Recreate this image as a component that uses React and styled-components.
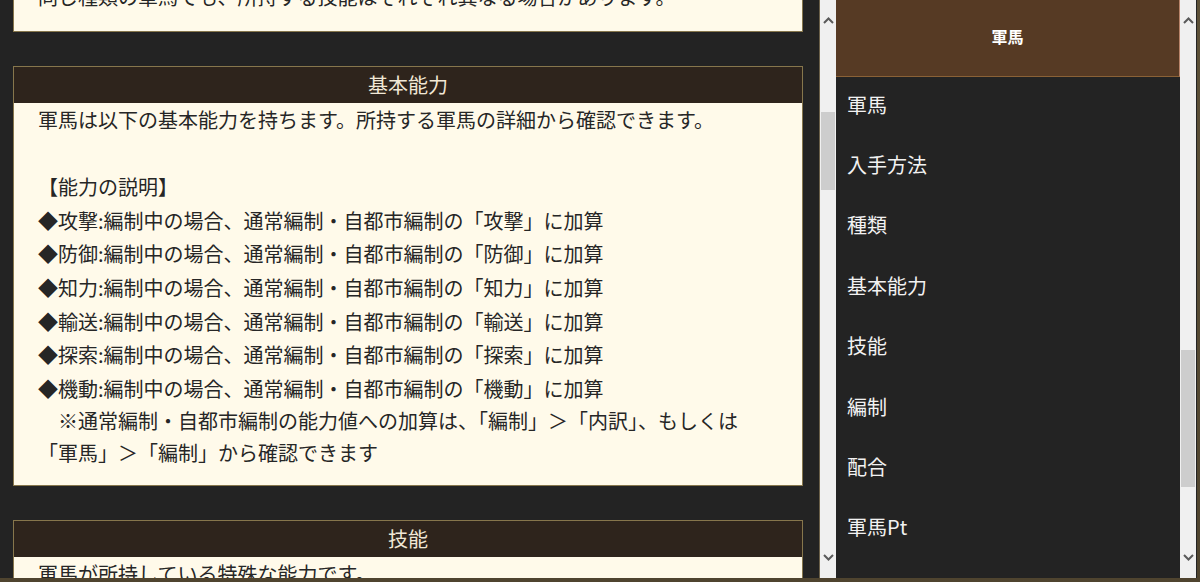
import React from "react";
import styled, { createGlobalStyle } from "styled-components";

// ** Global
const GlobalStyle = createGlobalStyle`
  html, body {
    margin: 0;
    padding: 0;
    background: #584c35;
  }
  body {
    font-family: "Noto Sans CJK JP", "Noto Sans", sans-serif;
  }
`;

// ** Frame
const Frame = styled.div`
  width: 1200px;
  height: 582px;
  overflow: hidden;
  background: linear-gradient(#5d5138, #4f442f);
`;

const Screen = styled.div`
  display: flex;
  width: 1197px;
  height: 578px;
  background: #232323;
  overflow: hidden;
`;

// ** Left content
const ContentPane = styled.div`
  width: 819px;
  height: 100%;
  overflow: hidden;
  border-right: 1px solid #6b6049;
`;

const ContentInner = styled.div`
  display: flex;
  flex-direction: column;
  gap: 34px;
  margin-top: ${(p) => -p.$scroll}px;
  padding: 0 16px 0 13px;
`;

const Card = styled.section`
  border: 1px solid #86764c;
  background: #fffaea;
`;

const CardHeader = styled.h2`
  margin: 0;
  height: 36px;
  line-height: 36px;
  background: #2e241c;
  color: #f1e8d6;
  font-size: 20px;
  font-weight: 400;
  text-align: center;
`;

const CardBody = styled.div`
  padding: 0 30px 17px 24px;
  color: #262626;
  font-size: 20px;
  line-height: 33.6px;
`;

const Line = styled.div`
  min-height: 33.6px;
  white-space: ${(p) => (p.$nowrap ? "nowrap" : "normal")};
`;

const Note = styled.p`
  margin: 0;
  text-indent: 20px;
  line-height: 31.5px;
`;

// ** Scrollbar
const ScrollBar = styled.div`
  width: 16px;
  height: 100%;
  flex-shrink: 0;
  display: flex;
  flex-direction: column;
  background: #f0f0f0;
`;

const ScrollButton = styled.div`
  height: ${(p) => p.$h}px;
  flex-shrink: 0;
  display: flex;
  align-items: center;
  justify-content: center;
`;

const ScrollTrack = styled.div`
  flex: 1;
  display: flex;
  flex-direction: column;
  align-items: center;
`;

const ScrollThumb = styled.div`
  width: 14px;
  margin-top: ${(p) => p.$top}px;
  height: ${(p) => p.$size}px;
  background: #cdcdcd;
`;

// ** Nav
const Nav = styled.nav`
  width: 344px;
  height: 100%;
  flex-shrink: 0;
  background: #232323;
  overflow: hidden;
`;

const NavHeader = styled.div`
  height: 77px;
  box-sizing: border-box;
  padding-bottom: 4px;
  display: flex;
  align-items: center;
  justify-content: center;
  background: #563a24;
  border-bottom: 1px solid #8a6136;
  border-right: 1px solid #b9846a;
  color: #ffffff;
  font-size: 16px;
  font-weight: 700;
`;

const NavList = styled.ul`
  list-style: none;
  margin: 0;
  padding: 0;
`;

const NavItem = styled.li`
  height: 60.4px;
  box-sizing: border-box;
  padding: 0 11px 6px;
  display: flex;
  align-items: center;
  color: #f2f2f2;
  font-size: 20px;
`;

const Chevron = ({ up }) => (
  <svg width="11" height="7" viewBox="0 0 11 7">
    <polyline
      points={up ? "1,6 5.5,1.5 10,6" : "1,1 5.5,5.5 10,1"}
      fill="none"
      stroke="#5a5a5a"
      strokeWidth="2"
    />
  </svg>
);

const FakeScroll = ({ top, size }) => (
  <ScrollBar>
    <ScrollButton $h={40}>
      <Chevron up />
    </ScrollButton>
    <ScrollTrack>
      <ScrollThumb $top={top} $size={size} />
    </ScrollTrack>
    <ScrollButton $h={42}>
      <Chevron />
    </ScrollButton>
  </ScrollBar>
);

const stats = ["攻撃", "防御", "知力", "輸送", "探索", "機動"];
const navItems = ["軍馬", "入手方法", "種類", "基本能力", "技能", "編制", "配合", "軍馬Pt"];

const App = () => {
  return (
    <>
      <GlobalStyle />
      <Frame>
        <Screen>
          <ContentPane>
            <ContentInner $scroll={56.6}>
              <Card>
                <CardHeader>種類</CardHeader>
                <CardBody>
                  <Line>
                    同じ種類の軍馬でも、所持する技能はそれぞれ異なる場合があります。
                  </Line>
                </CardBody>
              </Card>

              <Card>
                <CardHeader>基本能力</CardHeader>
                <CardBody>
                  <Line>
                    軍馬は以下の基本能力を持ちます。所持する軍馬の詳細から確認できます。
                  </Line>
                  <Line />
                  <Line>【能力の説明】</Line>
                  {stats.map((s) => (
                    <Line key={s} $nowrap>
                      ◆{s}:編制中の場合、通常編制・自都市編制の「{s}」に加算
                    </Line>
                  ))}
                  <Note>
                    ※通常編制・自都市編制の能力値への加算は、「編制」＞「内訳」、もしくは「軍馬」＞「編制」から確認できます
                  </Note>
                </CardBody>
              </Card>

              <Card>
                <CardHeader>技能</CardHeader>
                <CardBody>
                  <Line>軍馬が所持している特殊な能力です。</Line>
                  <Line>技能は軍馬ごとに異なります。</Line>
                </CardBody>
              </Card>
            </ContentInner>
          </ContentPane>
          <FakeScroll top={72} size={78} />

          <Nav>
            <NavHeader>軍馬</NavHeader>
            <NavList>
              {navItems.map((item) => (
                <NavItem key={item}>{item}</NavItem>
              ))}
            </NavList>
          </Nav>
          <FakeScroll top={310} size={137} />
        </Screen>
      </Frame>
    </>
  );
};

export default App;
